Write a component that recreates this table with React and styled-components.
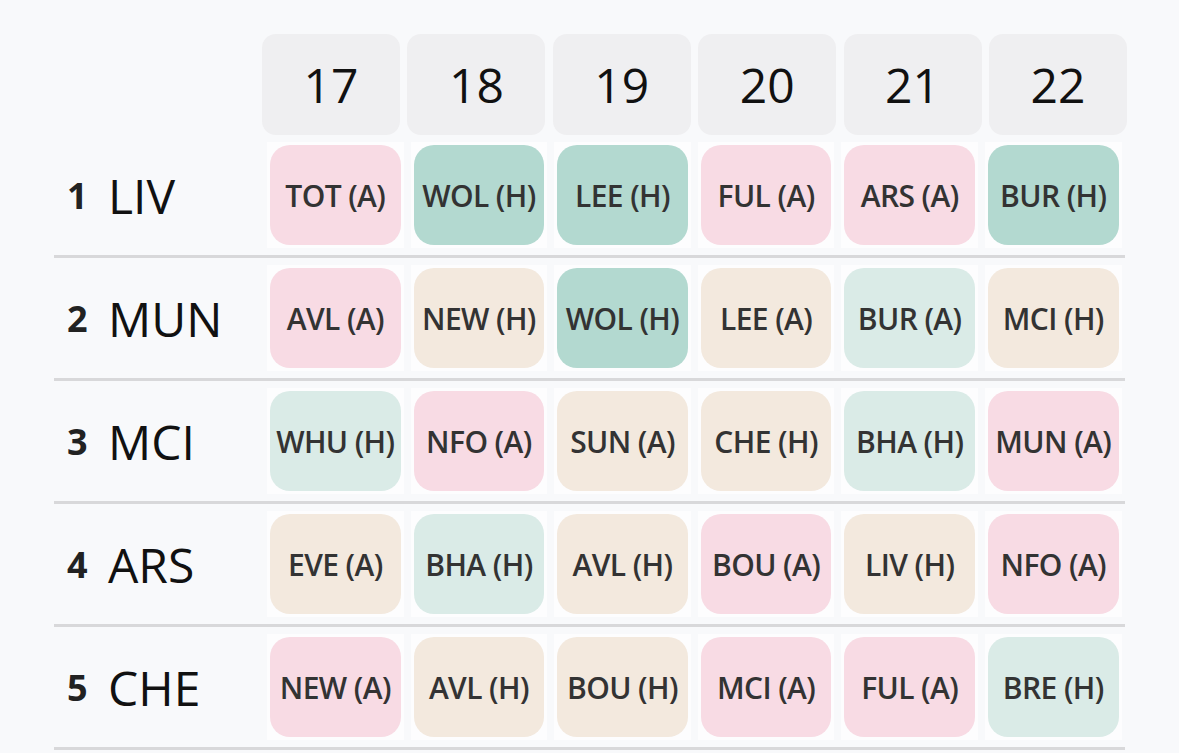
import styled, { createGlobalStyle } from "styled-components";

const GlobalStyle = createGlobalStyle`
    body{
        margin: 0;
        background: #f8f9fb;
        font-family: "Open Sans", "Noto Sans", sans-serif;
    }
`;

const COLORS = {
    hard: "#f8dbe4",
    easy: "#b3d9d0",
    fair: "#daebe7",
    mid: "#f3e9de"
};

const weeks = [17, 18, 19, 20, 21, 22];

const teams = [
    { rank: 1, name: "LIV", fixtures: [["TOT (A)", "hard"], ["WOL (H)", "easy"], ["LEE (H)", "easy"], ["FUL (A)", "hard"], ["ARS (A)", "hard"], ["BUR (H)", "easy"]] },
    { rank: 2, name: "MUN", fixtures: [["AVL (A)", "hard"], ["NEW (H)", "mid"], ["WOL (H)", "easy"], ["LEE (A)", "mid"], ["BUR (A)", "fair"], ["MCI (H)", "mid"]] },
    { rank: 3, name: "MCI", fixtures: [["WHU (H)", "fair"], ["NFO (A)", "hard"], ["SUN (A)", "mid"], ["CHE (H)", "mid"], ["BHA (H)", "fair"], ["MUN (A)", "hard"]] },
    { rank: 4, name: "ARS", fixtures: [["EVE (A)", "mid"], ["BHA (H)", "fair"], ["AVL (H)", "mid"], ["BOU (A)", "hard"], ["LIV (H)", "mid"], ["NFO (A)", "hard"]] },
    { rank: 5, name: "CHE", fixtures: [["NEW (A)", "hard"], ["AVL (H)", "mid"], ["BOU (H)", "mid"], ["MCI (A)", "hard"], ["FUL (A)", "hard"], ["BRE (H)", "fair"]] }
];

export default function App(){
    return(
        <>
            <GlobalStyle />
            <Table>
                <HeaderRow>
                    {weeks.map(w => <WeekCell key={w}>{w}</WeekCell>)}
                </HeaderRow>
                {teams.map(team => (
                    <TeamRow key={team.name}>
                        <Label>
                            <Rank>{team.rank}</Rank>
                            <Name>{team.name}</Name>
                        </Label>
                        {team.fixtures.map(([text, level], i) => (
                            <Cell key={i}>
                                <Chip level={level}>{text}</Chip>
                            </Cell>
                        ))}
                    </TeamRow>
                ))}
            </Table>
        </>
    );
}

const Table = styled.div`
    width: 1071px;
    margin-left: 54px;
    padding-top: 34px;
    display: flex;
    flex-direction: column;
`;
const HeaderRow = styled.div`
    margin-left: 208px;
    display: grid;
    grid-template-columns: repeat(6, 138px);
    column-gap: 7.4px;
`;
const WeekCell = styled.div`
    height: 101px;
    border-radius: 14px;
    background: #efeff1;
    display: flex;
    align-items: center;
    justify-content: center;
    font-size: 48px;
    color: #111111;
`;
const TeamRow = styled.div`
    padding: 7px 0;
    border-bottom: 3px solid #d8d8da;
    display: grid;
    grid-template-columns: 206px repeat(6, 136.6px);
    column-gap: 7px;
`;
const Label = styled.div`
    display: flex;
    align-items: center;
    padding-left: 13px;
`;
const Rank = styled.span`
    width: 41px;
    font-size: 36px;
    font-weight: 700;
    color: #222222;
`;
const Name = styled.span`
    font-size: 48px;
    color: #111111;
`;
const Cell = styled.div`
    height: 106px;
    box-sizing: border-box;
    padding: 3px;
    background: #fdfdfe;
`;
const Chip = styled.div`
    height: 100%;
    border-radius: 20px;
    background: ${props => COLORS[props.level]};
    display: flex;
    align-items: center;
    justify-content: center;
    font-size: 30px;
    font-weight: 600;
    letter-spacing: -0.6px;
    color: #333333;
    white-space: nowrap;
`;
